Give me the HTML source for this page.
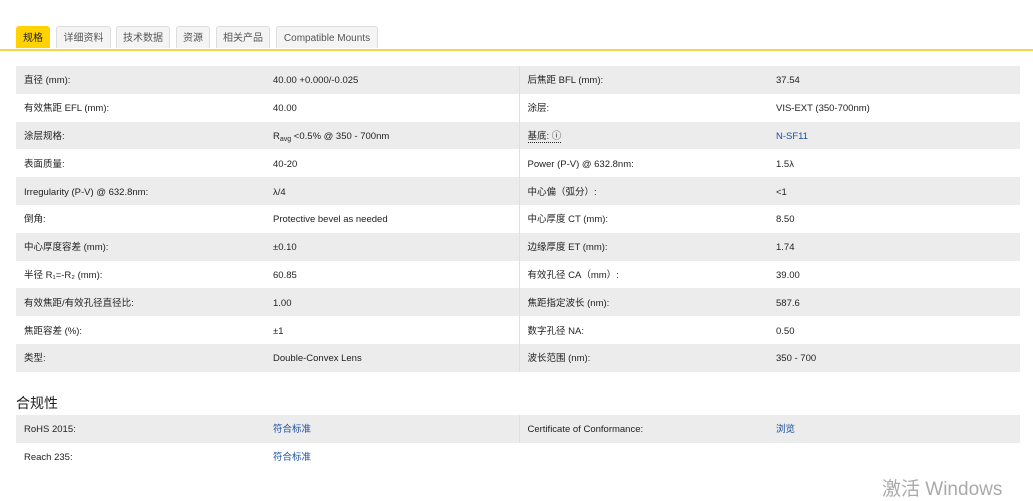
<!DOCTYPE html>
<html><head><meta charset="utf-8"><style>
body{margin:0;width:1033px;height:491px;overflow:hidden;background:#fff;font-family:"Liberation Sans","Noto Sans CJK SC",sans-serif;color:#222;position:relative}
.tabs{position:absolute;top:26px;left:0;width:1033px;height:23px;border-bottom:2px solid #f6d64a}
.tab{position:absolute;top:0;height:22px;line-height:24px;font-size:10px;color:#555;background:#f4f4f4;border:1px solid #ddd;border-bottom:none;text-align:center;box-sizing:border-box;border-radius:3px 3px 0 0}
.tab.a{background:#ffd200;border-color:#ffd200;color:#222}
table{position:absolute;left:16px;width:1004px;border-collapse:collapse;font-size:9.5px;table-layout:fixed}
td{height:27.8px;padding:3px 0 0 8px;box-sizing:border-box;vertical-align:middle;line-height:12px}
tr:nth-child(odd) td{background:#ececec}
td.c3{border-left:1px solid #e0e0e0}
a{color:#1a4fa0;text-decoration:none}
sub{font-size:7px;line-height:0;vertical-align:-2px}
h3{position:absolute;top:393px;left:16px;margin:0;font-size:14px;font-weight:normal;color:#222}
.wm{position:absolute;left:882px;top:474px;font-size:19px;color:#aaa}
</style></head><body>
<div class="tabs">
<div class="tab a" style="left:16px;width:34px">规格</div>
<div class="tab" style="left:56px;width:55px">详细资料</div>
<div class="tab" style="left:116px;width:54px">技术数据</div>
<div class="tab" style="left:176px;width:34px">资源</div>
<div class="tab" style="left:216px;width:54px">相关产品</div>
<div class="tab" style="left:276px;width:102px">Compatible Mounts</div>
</div>
<table style="top:66px">
<colgroup><col style="width:249px"><col style="width:254px"><col style="width:249px"><col></colgroup>
<tr><td>直径 (mm):</td><td>40.00 +0.000/-0.025</td><td class="c3">后焦距 BFL (mm):</td><td>37.54</td></tr>
<tr><td>有效焦距 EFL (mm):</td><td>40.00</td><td class="c3">涂层:</td><td>VIS-EXT (350-700nm)</td></tr>
<tr><td>涂层规格:</td><td>R<sub>avg</sub> &lt;0.5% @ 350 - 700nm</td><td class="c3"><span style="border-bottom:1px dotted #222">基底: ⓘ</span></td><td><a>N-SF11</a></td></tr>
<tr><td>表面质量:</td><td>40-20</td><td class="c3">Power (P-V) @ 632.8nm:</td><td>1.5λ</td></tr>
<tr><td>Irregularity (P-V) @ 632.8nm:</td><td>λ/4</td><td class="c3">中心偏（弧分）:</td><td>&lt;1</td></tr>
<tr><td>倒角:</td><td>Protective bevel as needed</td><td class="c3">中心厚度 CT (mm):</td><td>8.50</td></tr>
<tr><td>中心厚度容差 (mm):</td><td>±0.10</td><td class="c3">边缘厚度 ET (mm):</td><td>1.74</td></tr>
<tr><td>半径 R₁=-R₂ (mm):</td><td>60.85</td><td class="c3">有效孔径 CA（mm）:</td><td>39.00</td></tr>
<tr><td>有效焦距/有效孔径直径比:</td><td>1.00</td><td class="c3">焦距指定波长 (nm):</td><td>587.6</td></tr>
<tr><td>焦距容差 (%):</td><td>±1</td><td class="c3">数字孔径 NA:</td><td>0.50</td></tr>
<tr><td>类型:</td><td>Double-Convex Lens</td><td class="c3">波长范围 (nm):</td><td>350 - 700</td></tr>
</table>
<h3>合规性</h3>
<table style="top:415px">
<colgroup><col style="width:249px"><col style="width:254px"><col style="width:249px"><col></colgroup>
<tr><td>RoHS 2015:</td><td><a>符合标准</a></td><td class="c3">Certificate of Conformance:</td><td><a>浏览</a></td></tr>
<tr><td>Reach 235:</td><td><a>符合标准</a></td><td></td><td></td></tr>
</table>
<div class="wm">激活 Windows</div>
</body></html>
